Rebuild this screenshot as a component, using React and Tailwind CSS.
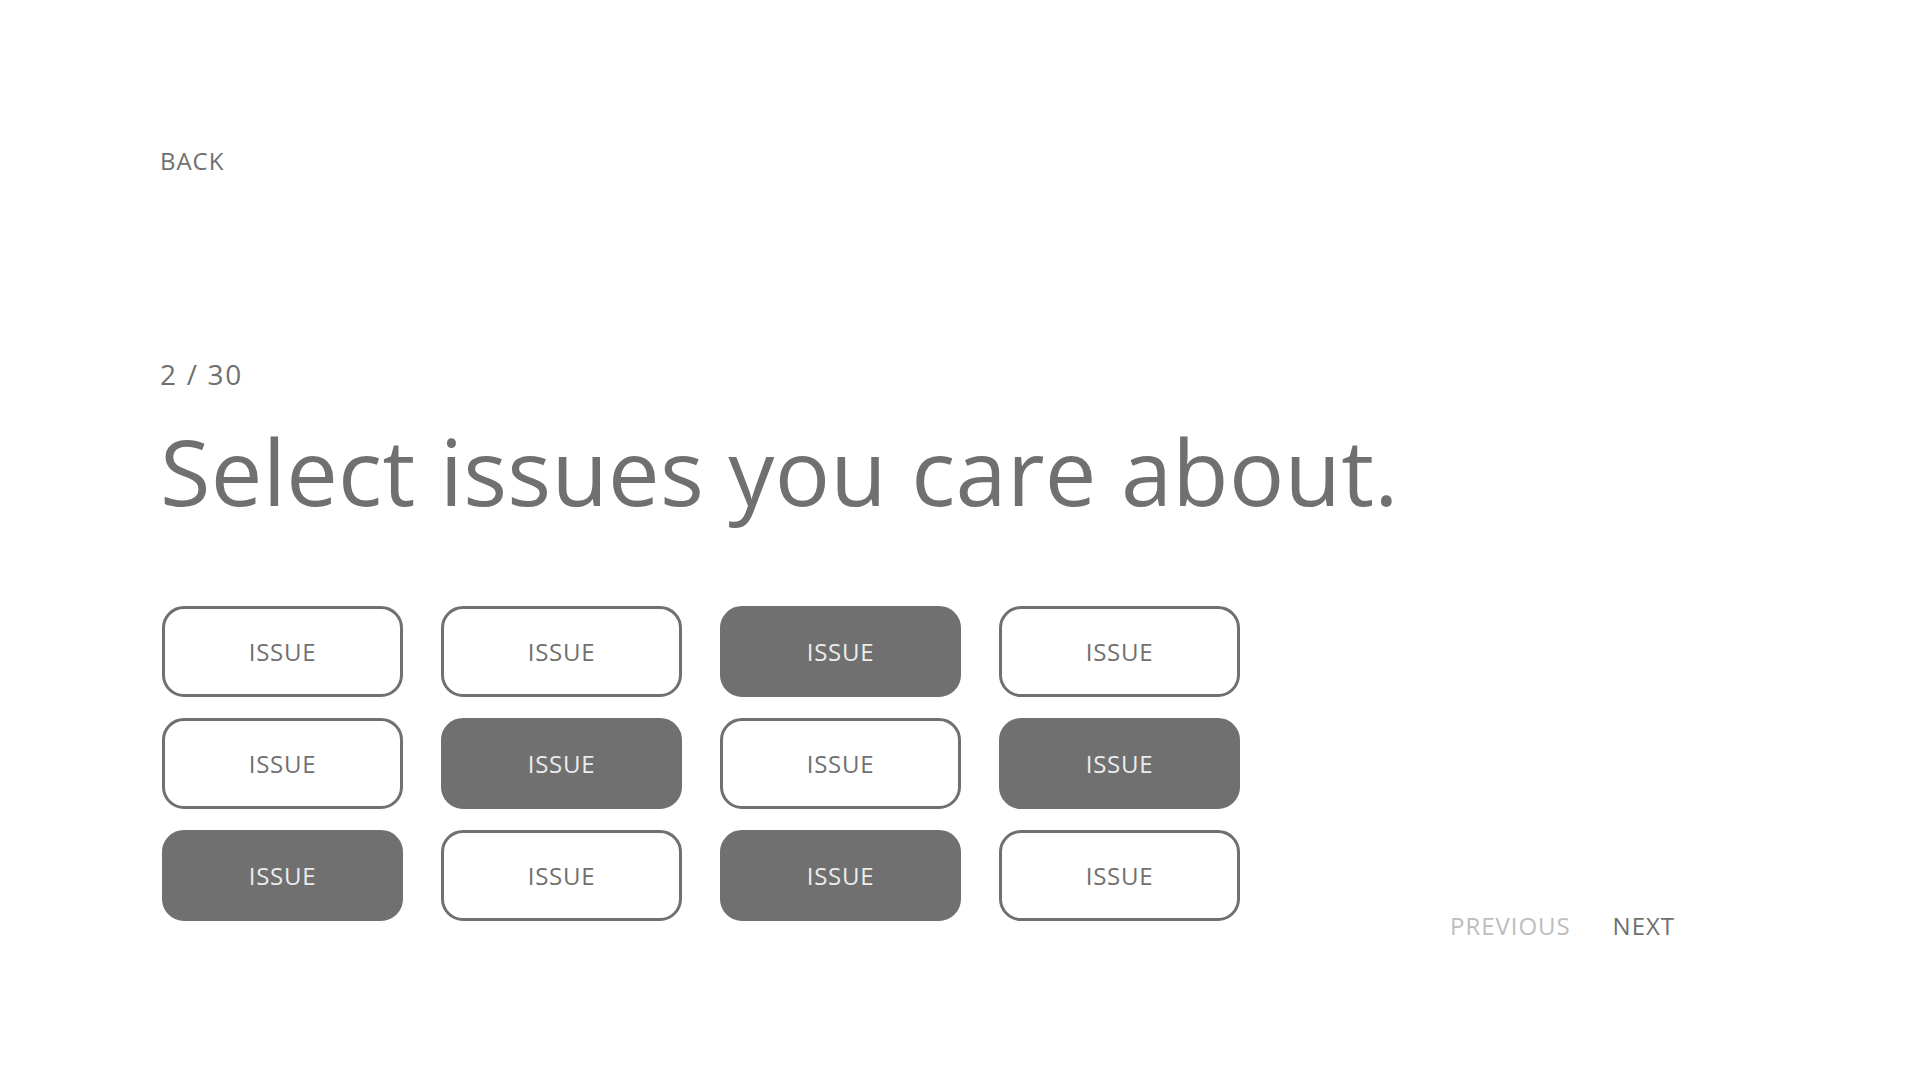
import React from "react";

const selected = [
  [false, false, true, false],
  [false, true, false, true],
  [true, false, true, false],
];

export default function App() {
  return (
    <div
      className="min-h-screen w-full bg-white pl-[160px] pt-[149px] font-normal text-[#707070]"
      style={{ fontFamily: '"Open Sans", "Noto Sans", sans-serif' }}
    >
      <div className="text-[24px] leading-none tracking-[0.04em]">BACK</div>
      <div className="mt-[187px] text-[28px] leading-none tracking-[0.06em]">2 / 30</div>
      <h1 className="mt-[37px] text-[92px] leading-none font-normal tracking-[0.003em] whitespace-nowrap">
        Select issues you care about.
      </h1>
      <div className="mt-[89px] flex items-start">
        <div className="ml-[2px] grid grid-cols-[repeat(4,241px)] gap-x-[38px] gap-y-[21px]">
          {selected.flat().map((on, i) => (
            <button
              key={i}
              className={
                on
                  ? "h-[91px] rounded-[22px] border-[3px] border-[#707070] bg-[#707070] text-[24px] leading-none tracking-[0.03em] text-[#ececec]"
                  : "h-[91px] rounded-[22px] border-[3px] border-[#707070] bg-white text-[24px] leading-none tracking-[0.03em] text-[#707070]"
              }
            >
              ISSUE
            </button>
          ))}
        </div>
        <div className="ml-[210px] mt-[308px] flex gap-[42px] text-[24px] leading-none tracking-[0.04em]">
          <span className="text-[#bdbdbd]">PREVIOUS</span>
          <span className="text-[#707070]">NEXT</span>
        </div>
      </div>
    </div>
  );
}
